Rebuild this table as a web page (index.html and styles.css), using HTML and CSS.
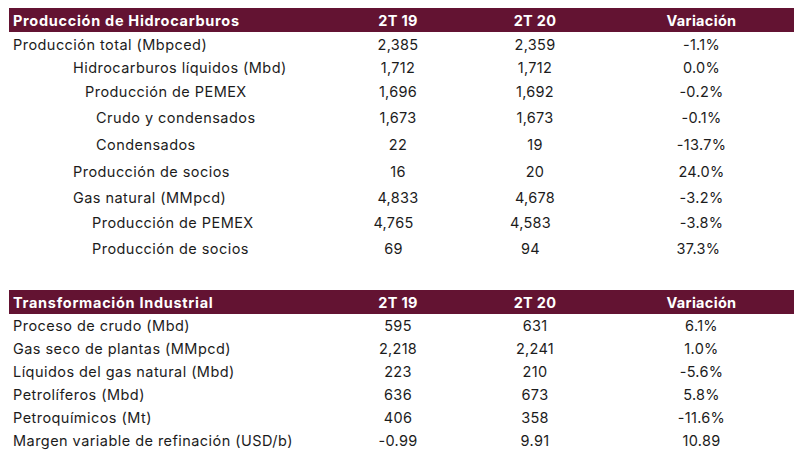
FILE: index.html
```html
<!DOCTYPE html>
<html lang="es">
<head>
<meta charset="utf-8">
<title>Producción de Hidrocarburos</title>
<link rel="stylesheet" href="styles.css">
</head>
<body>
<div class="page">
  <section class="tbl t1">
    <div class="head">
      <div class="lab">Producción de Hidrocarburos</div>
      <div class="num">2T 19</div>
      <div class="num">2T 20</div>
      <div class="num var">Variación</div>
    </div>
    <div class="row h24"><div class="lab">Producción total (Mbpced)</div><div class="num">2,385</div><div class="num">2,359</div><div class="num var">-1.1%</div></div>
    <div class="row h23"><div class="lab i1">Hidrocarburos líquidos (Mbd)</div><div class="num">1,712</div><div class="num">1,712</div><div class="num var">0.0%</div></div>
    <div class="row h25"><div class="lab i2">Producción de PEMEX</div><div class="num">1,696</div><div class="num">1,692</div><div class="num var">-0.2%</div></div>
    <div class="row h27"><div class="lab i3">Crudo y condensados</div><div class="num">1,673</div><div class="num">1,673</div><div class="num var">-0.1%</div></div>
    <div class="row h27"><div class="lab i3">Condensados</div><div class="num">22</div><div class="num">19</div><div class="num var">-13.7%</div></div>
    <div class="row h26"><div class="lab i1">Producción de socios</div><div class="num">16</div><div class="num">20</div><div class="num var">24.0%</div></div>
    <div class="row h26"><div class="lab i1">Gas natural (MMpcd)</div><div class="num">4,833</div><div class="num">4,678</div><div class="num var">-3.2%</div></div>
    <div class="row h25 off"><div class="lab i4">Producción de PEMEX</div><div class="num">4,765</div><div class="num">4,583</div><div class="num var">-3.8%</div></div>
    <div class="row h26 off"><div class="lab i4">Producción de socios</div><div class="num">69</div><div class="num">94</div><div class="num var off2">37.3%</div></div>
  </section>

  <section class="tbl t2">
    <div class="head">
      <div class="lab">Transformación Industrial</div>
      <div class="num">2T 19</div>
      <div class="num">2T 20</div>
      <div class="num var">Variación</div>
    </div>
    <div class="row h23"><div class="lab">Proceso de crudo (Mbd)</div><div class="num">595</div><div class="num">631</div><div class="num var">6.1%</div></div>
    <div class="row h23"><div class="lab">Gas seco de plantas (MMpcd)</div><div class="num">2,218</div><div class="num">2,241</div><div class="num var">1.0%</div></div>
    <div class="row h23"><div class="lab">Líquidos del gas natural (Mbd)</div><div class="num">223</div><div class="num">210</div><div class="num var">-5.6%</div></div>
    <div class="row h23"><div class="lab">Petrolíferos (Mbd)</div><div class="num">636</div><div class="num">673</div><div class="num var">5.8%</div></div>
    <div class="row h23"><div class="lab">Petroquímicos (Mt)</div><div class="num">406</div><div class="num">358</div><div class="num var">-11.6%</div></div>
    <div class="row h23"><div class="lab">Margen variable de refinación (USD/b)</div><div class="num">-0.99</div><div class="num">9.91</div><div class="num var">10.89</div></div>
  </section>
</div>
</body>
</html>
```

FILE: styles.css
```css
html, body {
  margin: 0;
  padding: 0;
  background: #ffffff;
}

body {
  font-family: Inter, "Open Sans", "DejaVu Sans", sans-serif;
  font-size: 14.5px;
  color: #1c1c1c;
}

.page {
  width: 785px;
  padding: 8px 0 0 9px;
}

.tbl {
  display: flex;
  flex-direction: column;
}

.t2 {
  margin-top: 29px;
}

.head,
.row {
  display: grid;
  grid-template-columns: 320px 138px 136px 191px;
  align-items: center;
}

.head {
  height: 24px;
  background: #631332;
  color: #ffffff;
  font-weight: 700;
}

.lab {
  padding-left: 4px;
  white-space: nowrap;
  letter-spacing: 0.45px;
}

.head .lab {
  letter-spacing: 0.7px;
}

.num {
  text-align: center;
  white-space: nowrap;
  letter-spacing: 0.3px;
}

.var {
  padding-left: 6px;
}

.off .num {
  padding-right: 9px;
}

.off .num.var {
  padding-right: 0;
}

.off .num.var.off2 {
  padding-right: 6px;
}

.i1 { padding-left: 64px; }
.i2 { padding-left: 76px; }
.i3 { padding-left: 87px; }
.i4 { padding-left: 83px; }

.h23 { height: 23px; }
.h24 { height: 24px; }
.h25 { height: 25px; }
.h26 { height: 26px; }
.h27 { height: 27px; }
```
